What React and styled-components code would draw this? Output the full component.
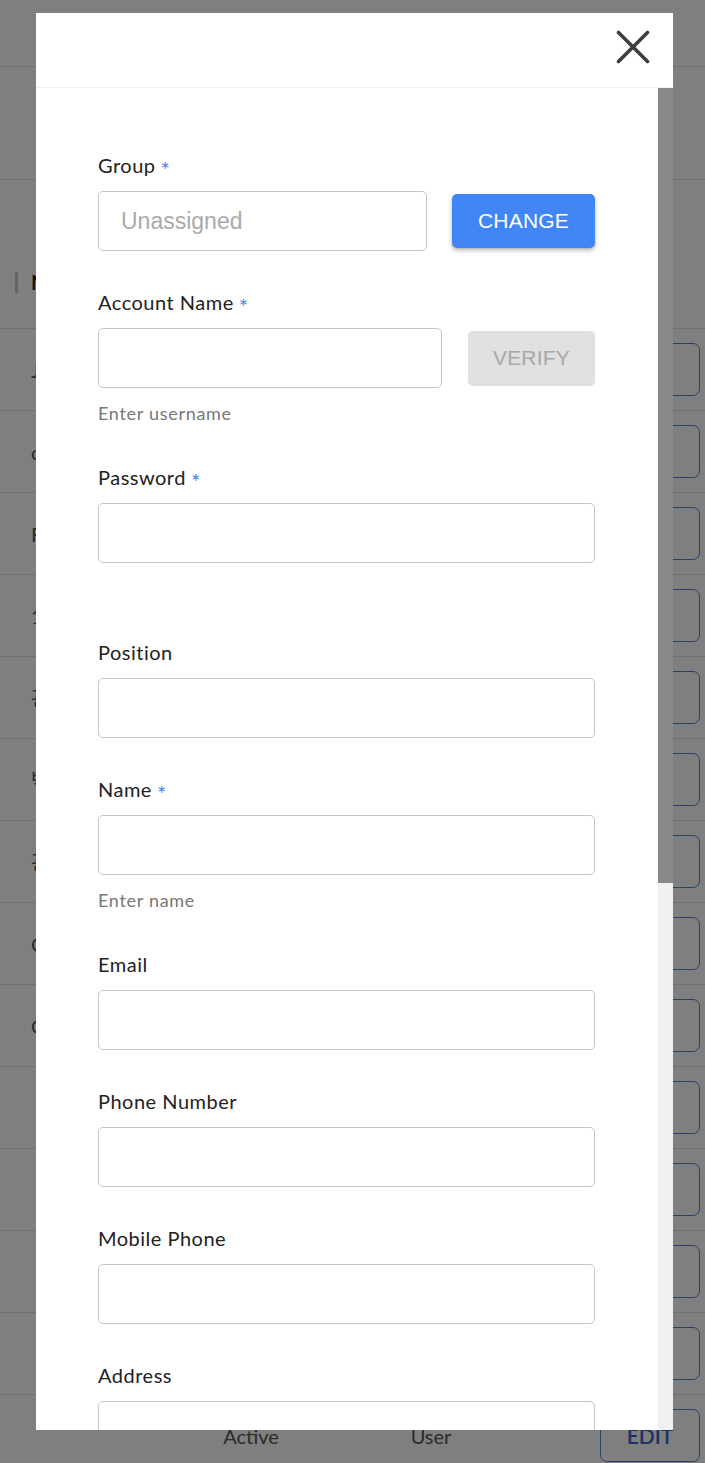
import React from 'react';
import styled, { createGlobalStyle } from 'styled-components';

const GlobalStyle = createGlobalStyle`
  html, body {
    margin: 0;
    padding: 0;
  }
  body {
    font-family: Lato, "Noto Sans", "Noto Sans CJK KR", sans-serif;
    background: #fff;
    overflow: hidden;
  }
`;

const Page = styled.div`
  width: 705px;
  height: 1463px;
  overflow: hidden;
  position: relative;
  background: #fff;
  color: #444;
`;

const TopBar = styled.div`
  height: 66px;
  border-bottom: 1px solid #dcdcdc;
`;

const FilterBar = styled.div`
  height: 112px;
  border-bottom: 1px solid #dcdcdc;
`;

const HeaderRow = styled.div`
  height: 149px;
  border-bottom: 1px solid #dcdcdc;
  display: flex;
  align-items: flex-end;
  padding-bottom: 34px;
  box-sizing: border-box;
`;

const HeaderCell = styled.div`
  display: flex;
  align-items: center;
  gap: 13px;
  padding-left: 15px;
  font-size: 20px;
  font-weight: 700;
  color: #222;

  &::before {
    content: '';
    width: 3px;
    height: 21px;
    background: #c8c8c8;
  }
`;

const Row = styled.div`
  height: 81px;
  border-bottom: 1px solid #dcdcdc;
  display: flex;
  align-items: center;
  font-size: 20px;
  color: #555;
`;

const NameCell = styled.div`
  width: 180px;
  padding-left: 31px;
  box-sizing: border-box;
`;

const CenterCell = styled.div`
  width: ${(p) => p.$width}px;
  text-align: center;
`;

const EditButton = styled.button`
  margin-left: auto;
  margin-right: 5px;
  width: 100px;
  height: 53px;
  border: 1px solid #5a80d0;
  border-radius: 7px;
  background: transparent;
  color: #3565cc;
  font-family: Lato, sans-serif;
  font-size: 21px;
  font-weight: 600;
`;

const Overlay = styled.div`
  position: fixed;
  inset: 0;
  background: rgba(0, 0, 0, 0.5);
`;

const Modal = styled.div`
  position: fixed;
  top: 13px;
  left: 36px;
  width: 637px;
  height: 1417px;
  background: #fff;
  display: flex;
  flex-direction: column;
  overflow: hidden;
`;

const ModalHeader = styled.div`
  height: 75px;
  box-sizing: border-box;
  border-bottom: 1px solid #eeeeee;
  display: flex;
  justify-content: flex-end;
  align-items: flex-start;
  padding: 16px 22px 0 0;
  flex-shrink: 0;
`;

const CloseButton = styled.button`
  border: 0;
  background: none;
  padding: 0;
  width: 36px;
  height: 36px;
  display: flex;
  align-items: center;
  justify-content: center;
  cursor: pointer;
`;

const BodyWrap = styled.div`
  flex: 1;
  min-height: 0;
  display: flex;
`;

const ModalBody = styled.div`
  flex: 1;
  overflow: hidden;
  padding: 66px 63px 0 62px;
`;

const ScrollTrack = styled.div`
  width: 15px;
  flex-shrink: 0;
  background: #f0f0f0;
`;

const ScrollThumb = styled.div`
  height: ${(p) => p.$size}px;
  background: #888;
`;

const Field = styled.div`
  margin-bottom: 40px;
`;

const Label = styled.label`
  display: flex;
  align-items: center;
  gap: 5px;
  height: 22px;
  margin-bottom: 15px;
  font-size: 20px;
  letter-spacing: 0.5px;
  color: #222;
`;

const Required = styled.span`
  color: #4a86f0;
  font-size: 22px;
  line-height: 1;
  position: relative;
  top: 5px;
`;

const InputRow = styled.div`
  display: flex;
  align-items: center;
  gap: ${(p) => p.$gap || 25}px;
`;

const Input = styled.input`
  flex: 1;
  min-width: 0;
  width: 100%;
  height: 60px;
  box-sizing: border-box;
  border: 1px solid #c6c6c6;
  border-radius: 5px;
  padding: 0 22px;
  font-family: "Liberation Sans", Arial, sans-serif;
  font-size: 23px;
  color: #333;
  outline: none;

  &::placeholder {
    color: #aaaaaa;
  }
`;

const ActionButton = styled.button`
  height: ${(p) => (p.$disabled ? 55 : 54)}px;
  padding: 0 ${(p) => (p.$disabled ? 25 : 26)}px;
  border: 0;
  border-radius: 5px;
  font-family: "Liberation Sans", Arial, sans-serif;
  font-size: 21px;
  letter-spacing: 0.2px;
  background: ${(p) => (p.$disabled ? '#e0e0e0' : '#4285f4')};
  color: ${(p) => (p.$disabled ? '#a8a8a8' : '#fff')};
  box-shadow: ${(p) =>
    p.$disabled ? 'none' : '0 3px 5px rgba(0, 0, 0, 0.22), 0 1px 2px rgba(0, 0, 0, 0.12)'};
  flex-shrink: 0;
`;

const Helper = styled.div`
  height: 38px;
  box-sizing: border-box;
  padding-top: 16px;
  line-height: 18px;
  font-size: 18px;
  letter-spacing: 0.7px;
  color: #777;
`;

const rows = [
  { name: 'Jason', status: 'Active', role: 'User' },
  { name: 'chris', status: 'Active', role: 'User' },
  { name: 'Frank', status: 'Active', role: 'User' },
  { name: '1004', status: 'Active', role: 'User' },
  { name: '관리자', status: 'Active', role: 'Admin' },
  { name: '박서준', status: 'Active', role: 'User' },
  { name: '관리팀', status: 'Active', role: 'User' },
  { name: 'Cindy', status: 'Active', role: 'User' },
  { name: 'Carl', status: 'Active', role: 'User' },
  { name: '', status: 'Active', role: 'User' },
  { name: '', status: 'Active', role: 'User' },
  { name: '', status: 'Active', role: 'User' },
  { name: '', status: 'Active', role: 'User' },
  { name: '', status: 'Active', role: 'User' },
];

const fields = [
  { label: 'Position' },
  { label: 'Name', required: true, helper: 'Enter name' },
  { label: 'Email' },
  { label: 'Phone Number' },
  { label: 'Mobile Phone' },
  { label: 'Address' },
];

const CloseIcon = () => (
  <svg width="34" height="34" viewBox="0 0 34 34">
    <path
      d="M2.5 2.5 L31.5 31.5 M31.5 2.5 L2.5 31.5"
      stroke="#3d3d3d"
      strokeWidth="3.6"
      strokeLinecap="round"
      fill="none"
    />
  </svg>
);

const App = () => {
  return (
    <>
      <GlobalStyle />
      <Page>
        <TopBar />
        <FilterBar />
        <HeaderRow>
          <HeaderCell>Name</HeaderCell>
        </HeaderRow>
        {rows.map((row, i) => (
          <Row key={i}>
            <NameCell>{row.name}</NameCell>
            <CenterCell $width={142}>{row.status}</CenterCell>
            <CenterCell $width={218}>{row.role}</CenterCell>
            <EditButton>EDIT</EditButton>
          </Row>
        ))}

        <Overlay />
        <Modal>
          <ModalHeader>
            <CloseButton aria-label="close">
              <CloseIcon />
            </CloseButton>
          </ModalHeader>
          <BodyWrap>
            <ModalBody>
              <Field>
                <Label>
                  Group <Required>*</Required>
                </Label>
                <InputRow $gap={25}>
                  <Input placeholder="Unassigned" readOnly />
                  <ActionButton>CHANGE</ActionButton>
                </InputRow>
              </Field>

              <Field>
                <Label>
                  Account Name <Required>*</Required>
                </Label>
                <InputRow $gap={26}>
                  <Input />
                  <ActionButton $disabled>VERIFY</ActionButton>
                </InputRow>
                <Helper>Enter username</Helper>
              </Field>

              <Field>
                <Label>
                  Password <Required>*</Required>
                </Label>
                <Input type="password" />
                <Helper />
              </Field>

              {fields.map((f) => (
                <Field key={f.label}>
                  <Label>
                    {f.label} {f.required && <Required>*</Required>}
                  </Label>
                  <Input />
                  {f.helper && <Helper>{f.helper}</Helper>}
                </Field>
              ))}
            </ModalBody>
            <ScrollTrack>
              <ScrollThumb $size={795} />
            </ScrollTrack>
          </BodyWrap>
        </Modal>
      </Page>
    </>
  );
};

export default App;
